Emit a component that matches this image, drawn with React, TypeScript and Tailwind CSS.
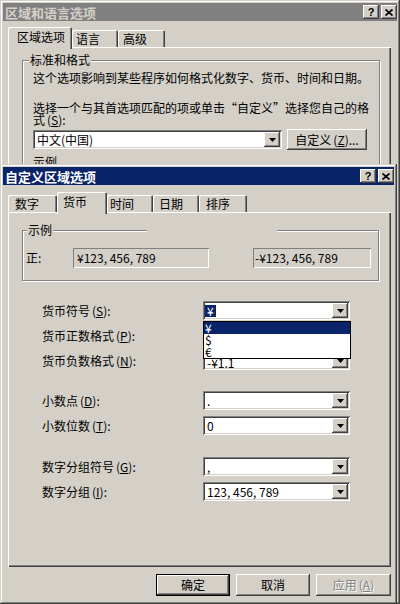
import React from "react";

const BEVEL_WIN =
  "shadow-[inset_-1px_-1px_#404040,inset_1px_1px_#d4d0c8,inset_-2px_-2px_#808080,inset_2px_2px_#ffffff]";
const BEVEL_BTN =
  "shadow-[inset_-1px_-1px_#404040,inset_1px_1px_#ffffff,inset_-2px_-2px_#808080,inset_2px_2px_#d4d0c8]";
const BEVEL_FIELD =
  "shadow-[inset_1px_1px_#808080,inset_-1px_-1px_#ffffff,inset_2px_2px_#404040,inset_-2px_-2px_#d4d0c8]";
const BEVEL_PANEL = "shadow-[inset_1px_1px_#ffffff,inset_-1px_-1px_#404040,inset_-2px_-2px_#808080]";
const BEVEL_STATIC = "shadow-[inset_1px_1px_#808080,inset_-1px_-1px_#ffffff]";
const BEVEL_TAB = "shadow-[inset_1px_1px_#ffffff,inset_-1px_0_#404040,inset_-2px_0_#808080]";
const ETCHED = "border border-[#808080] shadow-[inset_1px_1px_#ffffff,1px_1px_#ffffff]";

// mnemonic: "(X)" with the letter underlined
function Mn({ c }: { c: string }) {
  return (
    <span className="pl-[2px]">
      (<span className="underline underline-offset-[1px]">{c}</span>)
    </span>
  );
}

function CapBtn({ children }: { children: React.ReactNode }) {
  return (
    <div className={`flex h-[14px] w-[16px] items-center justify-center bg-[#d4d0c8] ${BEVEL_BTN}`}>
      {children}
    </div>
  );
}

function TitleBar({ title, active }: { title: string; active?: boolean }) {
  return (
    <div
      className={`flex h-[18px] shrink-0 items-center justify-between pl-[2px] ${
        active ? "bg-[#0a246a]" : "bg-[#808080]"
      }`}
    >
      <span className={`text-[13px] font-bold leading-[13px] ${active ? "text-white" : "text-[#d4d0c8]"}`}>
        {title}
      </span>
      <div className="flex gap-[2px]">
        <CapBtn>
          <span className="font-['Liberation_Sans',sans-serif] text-[11px] font-bold leading-[11px]">?</span>
        </CapBtn>
        <CapBtn>
          <svg width="8" height="7" viewBox="0 0 8 7" aria-hidden>
            <path d="M0.5 0.5 L7.5 6.5 M7.5 0.5 L0.5 6.5" stroke="#000" strokeWidth="1.7" />
          </svg>
        </CapBtn>
      </div>
    </div>
  );
}

function Tab({ label, w, pl, active }: { label: string; w: string; pl: string; active?: boolean }) {
  return (
    <div
      className={`flex items-start rounded-t-[2px] bg-[#d4d0c8] ${BEVEL_TAB} ${w} ${pl} ${
        active ? "relative z-10 -mb-[2px] h-[22px] pt-[4px]" : "h-[17px] pt-[3px]"
      }`}
    >
      {label}
    </div>
  );
}

function Arrow() {
  return (
    <div className={`flex h-[15px] w-[16px] shrink-0 items-center justify-center bg-[#d4d0c8] ${BEVEL_BTN}`}>
      <svg width="7" height="4" viewBox="0 0 7 4" aria-hidden>
        <polygon points="0,0 7,0 3.5,4" fill="#000" />
      </svg>
    </div>
  );
}

function Combo({ w, children, extra }: { w: string; children?: React.ReactNode; extra?: React.ReactNode }) {
  return (
    <div className={`relative flex h-[19px] shrink-0 items-center bg-white pr-[2px] ${BEVEL_FIELD} ${w}`}>
      <div className="flex flex-1 items-center pl-[4px]">{children}</div>
      <Arrow />
      {extra}
    </div>
  );
}

function Row({ label, children }: { label: React.ReactNode; children: React.ReactNode }) {
  return (
    <div className="flex h-[19px] items-center">
      <div className="w-[161px]">{label}</div>
      {children}
    </div>
  );
}

function PushBtn({
  label,
  w,
  isDefault,
  disabled,
}: {
  label: React.ReactNode;
  w: string;
  isDefault?: boolean;
  disabled?: boolean;
}) {
  const inner = (
    <div
      className={`flex h-full w-full items-center justify-center bg-[#d4d0c8] ${BEVEL_BTN} ${
        disabled ? "text-[#808080] [text-shadow:1px_1px_0_#ffffff]" : ""
      }`}
    >
      {label}
    </div>
  );
  return isDefault ? (
    <div className={`h-[22px] border border-black ${w}`}>{inner}</div>
  ) : (
    <div className={`h-[22px] ${w}`}>{inner}</div>
  );
}

export default function App() {
  return (
    <div
      lang="zh-CN"
      className={`relative flex h-[604px] w-[400px] flex-col overflow-hidden bg-[#d4d0c8] p-[3px] text-[12px] leading-[12px] whitespace-nowrap text-black font-['Noto_Sans_CJK_SC','Noto_Sans',sans-serif] ${BEVEL_WIN}`}
    >
      {/* back window: 区域和语言选项 */}
      <TitleBar title="区域和语言选项" />
      <div className="ml-[5px] mt-[7px] flex h-[19px] items-end">
        <Tab label="区域选项" w="w-[64px]" pl="pl-[9px]" active />
        <Tab label="语言" w="w-[46px]" pl="pl-[4px]" />
        <Tab label="高级" w="w-[47px]" pl="pl-[5px]" />
      </div>
      <div className={`ml-[5px] h-[300px] w-[383px] shrink-0 ${BEVEL_PANEL}`}>
        <div className={`relative ml-[14px] mt-[13px] h-[200px] w-[358px] pl-[10px] pt-[11px] ${ETCHED}`}>
          <span className="absolute -top-[7px] left-[6px] bg-[#d4d0c8] px-[1px]">标准和格式</span>
          <div>这个选项影响到某些程序如何格式化数字、货币、时间和日期。</div>
          <div className="mt-[18px]">选择一个与其首选项匹配的项或单击“自定义”选择您自己的格</div>
          <div>
            式<Mn c="S" />:
          </div>
          <div className="mt-[3px] flex items-center gap-[5px]">
            <Combo w="w-[249px]">中文(中国)</Combo>
            <div className="h-[21px] w-[80px]">
              <div className={`flex h-full w-full items-center justify-center bg-[#d4d0c8] ${BEVEL_BTN}`}>
                自定义<Mn c="Z" />...
              </div>
            </div>
          </div>
          <div className="mt-[6px]">示例</div>
        </div>
      </div>

      {/* front window: 自定义区域选项 */}
      <div className={`absolute left-0 top-[164px] flex h-[440px] w-[397px] flex-col bg-[#d4d0c8] p-[3px] ${BEVEL_WIN}`}>
        <TitleBar title="自定义区域选项" active />
        <div className="ml-[5px] mt-[7px] flex h-[20px] items-end">
          <Tab label="数字" w="w-[49px]" pl="pl-[7px]" />
          <Tab label="货币" w="w-[50px]" pl="pl-[6px]" active />
          <Tab label="时间" w="w-[46px]" pl="pl-[3px]" />
          <Tab label="日期" w="w-[46px]" pl="pl-[6px]" />
          <Tab label="排序" w="w-[48px]" pl="pl-[7px]" />
        </div>
        <div className={`ml-[5px] h-[355px] w-[383px] shrink-0 ${BEVEL_PANEL}`}>
          <div className={`relative ml-[14px] mt-[18px] flex h-[51px] w-[357px] items-start pl-[3px] pt-[17px] ${ETCHED}`}>
            <span className="absolute -top-[7px] left-[4px] bg-[#d4d0c8] px-[1px]">示例</span>
            <span className="absolute -top-[1px] left-[124px] h-[2px] w-[130px] bg-[#d4d0c8]" />
            <div className="flex h-[20px] w-[47px] items-center">正:</div>
            <div className={`flex h-[20px] w-[136px] items-center pl-[4px] ${BEVEL_STATIC}`}>¥123, 456, 789</div>
            <div className={`ml-[44px] flex h-[20px] w-[118px] items-center pl-[2px] ${BEVEL_STATIC}`}>
              -¥123, 456, 789
            </div>
          </div>

          <div className="ml-[34px] mt-[20px] flex flex-col">
            <div className="flex flex-col gap-[6px]">
              <Row label={<>货币符号<Mn c="S" />:</>}>
                <Combo
                  w="w-[147px]"
                  extra={
                    <div className="absolute left-0 top-[20px] z-20 flex h-[38px] w-[148px] flex-col border border-black bg-white">
                      <div className="h-[12px] bg-[#0a246a] pl-[1px] leading-[12px] text-white">¥</div>
                      <div className="h-[12px] pl-[1px] leading-[12px]">$</div>
                      <div className="h-[12px] pl-[1px] leading-[12px]">€</div>
                    </div>
                  }
                >
                  <span className="-ml-[2px] bg-[#0a246a] px-[2px] leading-[12px] text-white">¥</span>
                </Combo>
              </Row>
              <Row label={<>货币正数格式<Mn c="P" />:</>}>
                <Combo w="w-[147px]" />
              </Row>
              <Row label={<>货币负数格式<Mn c="N" />:</>}>
                <Combo w="w-[147px]">
                  <span className="relative top-[2px]">-¥1.1</span>
                </Combo>
              </Row>
            </div>

            <div className="mt-[21px] flex flex-col gap-[6px]">
              <Row label={<>小数点<Mn c="D" />:</>}>
                <Combo w="w-[147px]">.</Combo>
              </Row>
              <Row label={<>小数位数<Mn c="T" />:</>}>
                <Combo w="w-[147px]">0</Combo>
              </Row>
            </div>

            <div className="mt-[22px] flex flex-col gap-[6px]">
              <Row label={<>数字分组符号<Mn c="G" />:</>}>
                <Combo w="w-[147px]">,</Combo>
              </Row>
              <Row label={<>数字分组<Mn c="I" />:</>}>
                <Combo w="w-[147px]">123, 456, 789</Combo>
              </Row>
            </div>
          </div>
        </div>

        <div className="mr-[3px] mt-[7px] flex justify-end gap-[6px]">
          <PushBtn label="确定" w="w-[74px]" isDefault />
          <PushBtn label="取消" w="w-[74px]" />
          <PushBtn label={<>应用<Mn c="A" /></>} w="w-[75px]" disabled />
        </div>
      </div>
    </div>
  );
}
